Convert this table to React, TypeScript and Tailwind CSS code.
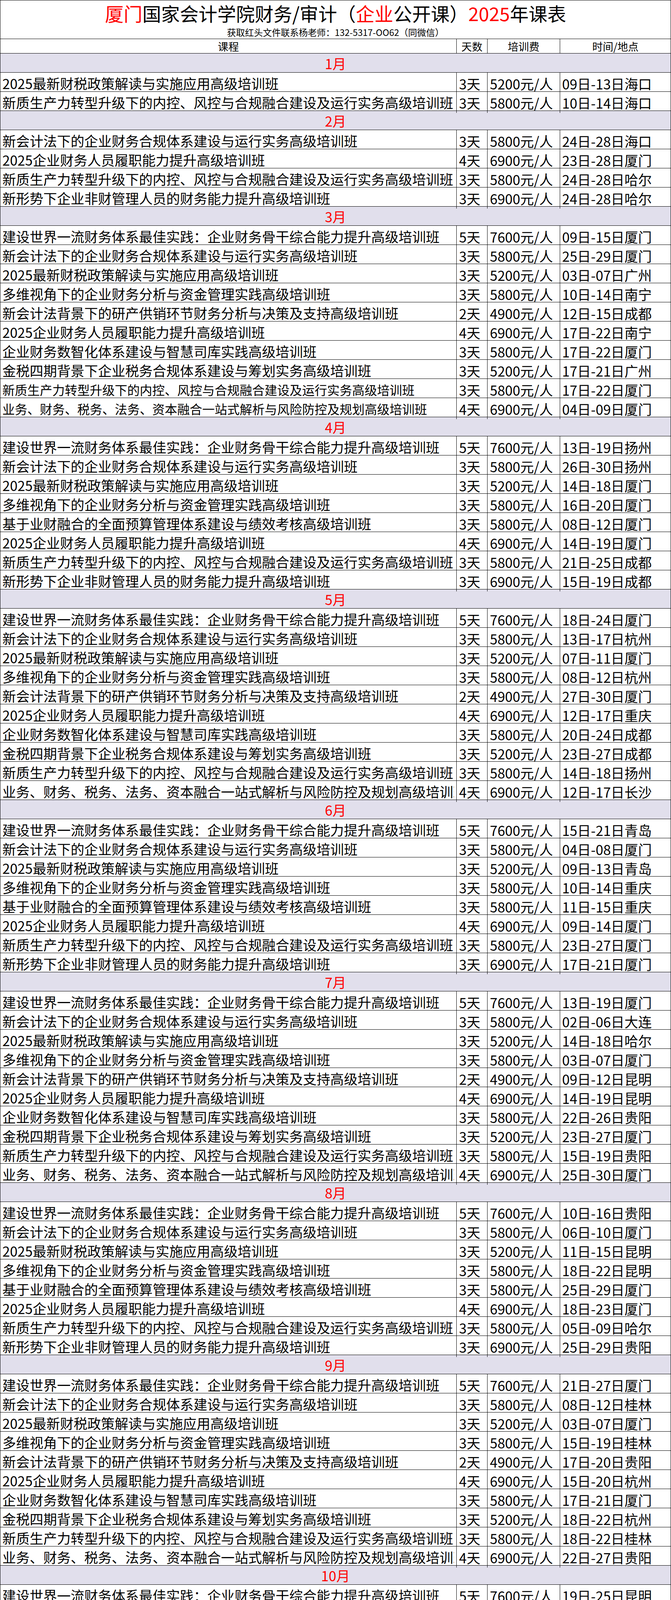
import React from 'react';

type CourseKey = keyof typeof COURSES;

const COURSES = {
    jsyl: { name: '建设世界一流财务体系最佳实践：企业财务骨干综合能力提升高级培训班', days: '5天', fee: '7600元/人' },
    kjf: { name: '新会计法下的企业财务合规体系建设与运行实务高级培训班', days: '3天', fee: '5800元/人' },
    cs: { name: '2025最新财税政策解读与实施应用高级培训班', days: '3天', fee: '5200元/人' },
    dw: { name: '多维视角下的企业财务分析与资金管理实践高级培训班', days: '3天', fee: '5800元/人' },
    ycgx: { name: '新会计法背景下的研产供销环节财务分析与决策及支持高级培训班', days: '2天', fee: '4900元/人' },
    lz: { name: '2025企业财务人员履职能力提升高级培训班', days: '4天', fee: '6900元/人' },
    szh: { name: '企业财务数智化体系建设与智慧司库实践高级培训班', days: '3天', fee: '5800元/人' },
    js: { name: '金税四期背景下企业税务合规体系建设与筹划实务高级培训班', days: '3天', fee: '5200元/人' },
    xz: { name: '新质生产力转型升级下的内控、风控与合规融合建设及运行实务高级培训班', days: '3天', fee: '5800元/人' },
    yw: { name: '业务、财务、税务、法务、资本融合一站式解析与风险防控及规划高级培训班', days: '4天', fee: '6900元/人' },
    yc: { name: '基于业财融合的全面预算管理体系建设与绩效考核高级培训班', days: '3天', fee: '5800元/人' },
    fc: { name: '新形势下企业非财管理人员的财务能力提升高级培训班', days: '3天', fee: '6900元/人' },
};

// [课程, 时间/地点, 字号缩小]
type Entry = [CourseKey, string, boolean?];

const SCHEDULE: { month: string; rows: Entry[] }[] = [
    { month: '1月', rows: [['cs', '09日-13日海口'], ['xz', '10日-14日海口']] },
    {
        month: '2月',
        rows: [['kjf', '24日-28日海口'], ['lz', '23日-28日厦门'], ['xz', '24日-28日哈尔'], ['fc', '24日-28日哈尔']],
    },
    {
        month: '3月',
        rows: [
            ['jsyl', '09日-15日厦门'], ['kjf', '25日-29日厦门'], ['cs', '03日-07日广州'], ['dw', '10日-14日南宁'],
            ['ycgx', '12日-15日成都'], ['lz', '17日-22日南宁'], ['szh', '17日-22日厦门'], ['js', '17日-21日广州'],
            ['xz', '17日-22日厦门', true], ['yw', '04日-09日厦门', true],
        ],
    },
    {
        month: '4月',
        rows: [
            ['jsyl', '13日-19日扬州'], ['kjf', '26日-30日扬州'], ['cs', '14日-18日厦门'], ['dw', '16日-20日厦门'],
            ['yc', '08日-12日厦门'], ['lz', '14日-19日厦门'], ['xz', '21日-25日成都'], ['fc', '15日-19日成都'],
        ],
    },
    {
        month: '5月',
        rows: [
            ['jsyl', '18日-24日厦门'], ['kjf', '13日-17日杭州'], ['cs', '07日-11日厦门'], ['dw', '08日-12日杭州'],
            ['ycgx', '27日-30日厦门'], ['lz', '12日-17日重庆'], ['szh', '20日-24日成都'], ['js', '23日-27日成都'],
            ['xz', '14日-18日扬州'], ['yw', '12日-17日长沙'],
        ],
    },
    {
        month: '6月',
        rows: [
            ['jsyl', '15日-21日青岛'], ['kjf', '04日-08日厦门'], ['cs', '09日-13日青岛'], ['dw', '10日-14日重庆'],
            ['yc', '11日-15日重庆'], ['lz', '09日-14日厦门'], ['xz', '23日-27日厦门'], ['fc', '17日-21日厦门'],
        ],
    },
    {
        month: '7月',
        rows: [
            ['jsyl', '13日-19日厦门'], ['kjf', '02日-06日大连'], ['cs', '14日-18日哈尔'], ['dw', '03日-07日厦门'],
            ['ycgx', '09日-12日昆明'], ['lz', '14日-19日昆明'], ['szh', '22日-26日贵阳'], ['js', '23日-27日厦门'],
            ['xz', '15日-19日贵阳'], ['yw', '25日-30日厦门'],
        ],
    },
    {
        month: '8月',
        rows: [
            ['jsyl', '10日-16日贵阳'], ['kjf', '06日-10日厦门'], ['cs', '11日-15日昆明'], ['dw', '18日-22日昆明'],
            ['yc', '25日-29日厦门'], ['lz', '18日-23日厦门'], ['xz', '05日-09日哈尔'], ['fc', '25日-29日贵阳'],
        ],
    },
    {
        month: '9月',
        rows: [
            ['jsyl', '21日-27日厦门'], ['kjf', '08日-12日桂林'], ['cs', '03日-07日厦门'], ['dw', '15日-19日桂林'],
            ['ycgx', '17日-20日贵阳'], ['lz', '15日-20日杭州'], ['szh', '17日-21日厦门'], ['js', '18日-22日杭州'],
            ['xz', '18日-22日桂林'], ['yw', '22日-27日贵阳'],
        ],
    },
    {
        month: '10月',
        rows: [
            ['jsyl', '19日-25日昆明'], ['kjf', '09日-13日厦门'], ['cs', '13日-17日成都'], ['dw', '15日-19日成都'],
            ['yc', '21日-25日杭州'], ['lz', '26日-31日厦门'], ['xz', '24日-28日杭州'], ['fc', '16日-20日桂林'],
        ],
    },
    {
        month: '11月',
        rows: [
            ['jsyl', '09日-15日厦门'], ['kjf', '12日-16日成都'], ['cs', '19日-23日厦门'], ['dw', '03日-07日南京'],
            ['ycgx', '07日-10日南京'], ['lz', '17日-22日杭州'], ['szh', '10日-15日成都'], ['js', '24日-28日厦门'],
            ['xz', '10日-15日重庆'], ['yw', '16日-21日重庆'],
        ],
    },
    {
        month: '12月',
        rows: [
            ['jsyl', '14日-20日广州'], ['yc', '16日-20日厦门'], ['lz', '08日-13日厦门'], ['xz', '24日-28日海口'],
            ['fc', '16日-20日海口'],
        ],
    },
];

const CourseRow: React.FC<{ entry: Entry }> = ({ entry }) => {
    const [key, time, small] = entry;
    const c = COURSES[key];
    return (
        <div className="grid grid-cols-[1168px_79px_186px_284px] h-[49px] border-b border-black text-black text-[35px] leading-none whitespace-nowrap">
            <div className="flex items-center pl-[5px]">
                {/* 单元格宽度不够时像表格一样截断 */}
                <span className={`block w-[1157px] h-[54px] leading-[54px] overflow-hidden ${small ? 'text-[32px]' : ''}`}>
                    {c.name}
                </span>
            </div>
            <div className="flex items-center pl-[6px] border-l border-black">{c.days}</div>
            <div className="flex items-center pl-[6px] border-l border-black">{c.fee}</div>
            <div className="flex items-center pl-[5px] border-l border-black">{time}</div>
        </div>
    );
};

const App: React.FC = () => {
    return (
        <div className="w-[1719px] bg-white border border-black font-['Noto_Sans_CJK_SC','Noto_Sans',sans-serif]">
            <div className="flex flex-col border-b border-black">
                <div className="h-[64px] flex items-center justify-center text-[48px] leading-none text-black whitespace-nowrap">
                    <span className="text-[#ff0000]">厦门</span>
                    <span>国家会计学院财务/审计（</span>
                    <span className="text-[#ff0000]">企业</span>
                    <span>公开课）</span>
                    <span className="text-[#ff0000]">2025</span>
                    <span>年课表</span>
                </div>
                <div className="h-[34px] flex items-center justify-center text-[23px] leading-none text-black">
                    获取红头文件联系杨老师：132-5317-OO62（同微信）
                </div>
            </div>

            <div className="grid grid-cols-[1168px_79px_186px_284px] h-[37px] border-b border-black text-[27px] leading-none text-black">
                <div className="flex items-center justify-center">课程</div>
                <div className="flex items-center justify-center border-l border-black">天数</div>
                <div className="flex items-center justify-center border-l border-black">培训费</div>
                <div className="flex items-center justify-center border-l border-black">时间/地点</div>
            </div>

            {SCHEDULE.map((m) => (
                <React.Fragment key={m.month}>
                    <div className="h-[49px] flex items-center justify-center bg-[#e1dfec] border-b border-black text-[35px] leading-none text-[#ff0000]">
                        {m.month}
                    </div>
                    {m.rows.map((r, i) => (
                        <CourseRow key={m.month + i} entry={r} />
                    ))}
                </React.Fragment>
            ))}
        </div>
    );
};

export default App;
